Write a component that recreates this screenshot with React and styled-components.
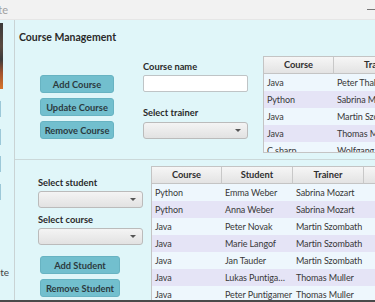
import React from "react";
import styled, { createGlobalStyle } from "styled-components";

const GlobalStyle = createGlobalStyle`
  html, body {
    margin: 0;
    padding: 0;
    width: 375px;
    height: 302px;
    overflow: hidden;
    background: #e0f6f9;
    font-family: Lato, "Open Sans", sans-serif;
    color: #333;
  }
`;

const Window = styled.div`
  width: 375px;
  height: 302px;
  display: flex;
  flex-direction: column;
  overflow: hidden;
`;

const TitleBar = styled.div`
  height: 20px;
  flex: none;
  background: #f2f2f2;
  border-bottom: 1px solid #e6e6e6;
  box-sizing: border-box;
  display: flex;
  align-items: center;
  justify-content: space-between;
  font-size: 11px;
  color: #a0a0a0;
`;

const Clip = styled.div`
  width: ${(p) => p.$w}px;
  display: flex;
  justify-content: flex-end;
  white-space: nowrap;
`;

const Minimize = styled.span`
  width: 8px;
  height: 1px;
  background: #777;
`;

const Body = styled.div`
  flex: 1;
  display: flex;
  min-height: 0;
  border-bottom: 2px solid #4a4a4a;
`;

const Sidebar = styled.div`
  width: 14px;
  flex: none;
  border-right: 1px solid #c9d3d4;
  display: flex;
  flex-direction: column;
  padding-top: 3px;
  overflow: hidden;
`;

const Photo = styled.div`
  width: 3px;
  height: 66px;
  background: linear-gradient(
    #3a3a3a 0%,
    #5a4a40 35%,
    #3c3c3c 55%,
    #a0522d 75%,
    #d8752a 100%
  );
`;

const SideStub = styled.div`
  width: 1px;
  height: 16px;
  margin-top: ${(p) => p.$gap}px;
  background: #9cc8d8;
`;

const SideText = styled.div`
  margin-top: auto;
  margin-bottom: 22px;
  font-size: 10px;
  color: #444;
`;

const Main = styled.div`
  flex: 1;
  display: flex;
  flex-direction: column;
  overflow: hidden;
`;

const TopSection = styled.div`
  height: 140px;
  flex: none;
  box-sizing: border-box;
  border-bottom: 1px solid #cbd8d9;
  padding-left: 4px;
`;

const Heading = styled.div`
  font-weight: 700;
  font-size: 10.5px;
  height: 14px;
  line-height: 14px;
  margin-top: 10px;
  color: #2a2a2a;
`;

const Row = styled.div`
  display: flex;
  align-items: flex-start;
  margin-top: ${(p) => p.$top}px;
`;

const ButtonCol = styled.div`
  display: flex;
  flex-direction: column;
  gap: 5px;
  margin-left: ${(p) => p.$left}px;
  padding-top: ${(p) => p.$top}px;
`;

const ActionButton = styled.button`
  width: ${(p) => p.$w}px;
  height: 18px;
  padding: 0;
  border: 1px solid #68b3c2;
  border-radius: 3px;
  background: #72bfce;
  font-family: inherit;
  font-weight: 700;
  font-size: 9.3px;
  white-space: nowrap;
  color: #2c3a3e;
  cursor: pointer;
`;

const FormCol = styled.div`
  display: flex;
  flex-direction: column;
  width: 105px;
  margin-left: ${(p) => p.$left}px;
  padding-top: ${(p) => p.$top}px;
`;

const Label = styled.div`
  font-weight: 700;
  font-size: 9.3px;
  height: 12px;
  line-height: 12px;
  white-space: nowrap;
  margin-top: ${(p) => p.$top || 0}px;
  margin-bottom: ${(p) => p.$bottom || 2}px;
  color: #2a2a2a;
`;

const TextField = styled.input`
  width: 105px;
  height: 17px;
  box-sizing: border-box;
  border: 1px solid #bfc4c6;
  border-radius: 2px;
  background: #fff;
  padding: 0 4px;
  outline: none;
`;

const Combo = styled.div`
  width: 105px;
  height: 17px;
  box-sizing: border-box;
  border: 1px solid #bbbbbb;
  border-radius: 3px;
  background: linear-gradient(#f4f4f4, #e2e2e2);
  display: flex;
  align-items: center;
  justify-content: flex-end;
  padding-right: 6px;
`;

const Arrow = styled.span`
  width: 0;
  height: 0;
  border-left: 3px solid transparent;
  border-right: 3px solid transparent;
  border-top: 3px solid #555;
`;

const TableBox = styled.div`
  margin-left: ${(p) => p.$left}px;
  flex: none;
  border: 1px solid #c4c4c4;
  border-right: none;
  height: ${(p) => p.$h}px;
  overflow: hidden;
  box-sizing: border-box;
  background: #eef7fd;
`;

const Grid = styled.div`
  display: grid;
  grid-template-columns: ${(p) => p.$cols};
  font-size: 9px;
`;

const HeadCell = styled.div`
  height: 16px;
  line-height: 16px;
  text-align: center;
  font-weight: 700;
  font-size: 9.3px;
  color: #2f2f2f;
  background: linear-gradient(#f6f6f6, #e3e3e3);
  border-right: 1px solid #c8c8c8;
  border-bottom: 1px solid #c4c4c4;
`;

const Cell = styled.div`
  height: 17px;
  line-height: 17px;
  padding-left: 3px;
  padding-right: 1px;
  letter-spacing: -0.1px;
  white-space: nowrap;
  overflow: hidden;
  text-overflow: ellipsis;
  color: #383838;
  background: ${(p) => (p.$odd ? "#e5e4f6" : "#eef7fd")};
`;

const BottomSection = styled.div`
  flex: 1;
  display: flex;
  align-items: flex-start;
  padding-top: 6px;
`;

const StudentCol = styled.div`
  display: flex;
  flex-direction: column;
  width: 105px;
  margin-left: 23px;
  padding-top: 11px;
`;

const courses = [
  ["Java", "Peter Thaler"],
  ["Python", "Sabrina Mozart"],
  ["Java", "Martin Szombath"],
  ["Java", "Thomas Muller"],
  ["C sharp", "Wolfgang Tauber"],
];

const enrollments = [
  ["Python", "Emma Weber", "Sabrina Mozart"],
  ["Python", "Anna Weber", "Sabrina Mozart"],
  ["Java", "Peter Novak", "Martin Szombath"],
  ["Java", "Marie Langof", "Martin Szombath"],
  ["Java", "Jan Tauder", "Martin Szombath"],
  ["Java", "Lukas Puntigamer", "Thomas Muller"],
  ["Java", "Peter Puntigamer", "Thomas Muller"],
];

const DropDown = () => (
  <Combo>
    <Arrow />
  </Combo>
);

export default function App() {
  return (
    <>
      <GlobalStyle />
      <Window>
        <TitleBar>
          <Clip $w={8}>Course Management Suite</Clip>
          <Minimize />
        </TitleBar>
        <Body>
          <Sidebar>
            <Photo />
            <SideStub $gap={12} />
            <SideStub $gap={12} />
            <SideStub $gap={11} />
            <SideStub $gap={12} />
            <SideText>
              <Clip $w={9}>Delete</Clip>
            </SideText>
          </Sidebar>
          <Main>
            <TopSection>
              <Heading>Course Management</Heading>
              <Row $top={12}>
                <ButtonCol $left={21} $top={19}>
                  <ActionButton $w={74}>Add Course</ActionButton>
                  <ActionButton $w={74}>Update Course</ActionButton>
                  <ActionButton $w={74}>Remove Course</ActionButton>
                </ButtonCol>
                <FormCol $left={29} $top={5}>
                  <Label>Course name</Label>
                  <TextField />
                  <Label $top={15} $bottom={3}>
                    Select trainer
                  </Label>
                  <DropDown />
                </FormCol>
                <TableBox $left={15} $h={97}>
                  <Grid $cols="70px 90px">
                    <HeadCell>Course</HeadCell>
                    <HeadCell>Trainer</HeadCell>
                    {courses.map((r, i) =>
                      r.map((c, j) => (
                        <Cell key={i + "-" + j} $odd={i % 2 === 1}>
                          {c}
                        </Cell>
                      ))
                    )}
                  </Grid>
                </TableBox>
              </Row>
            </TopSection>
            <BottomSection>
              <StudentCol>
                <Label>Select student</Label>
                <DropDown />
                <Label $top={6} $bottom={0}>
                  Select course
                </Label>
                <DropDown />
                <ButtonCol $left={2} $top={11}>
                  <ActionButton $w={80}>Add Student</ActionButton>
                  <ActionButton $w={80}>Remove Student</ActionButton>
                </ButtonCol>
              </StudentCol>
              <TableBox $left={8} $h={140}>
                <Grid $cols="70px 71px 71px 60px">
                  <HeadCell>Course</HeadCell>
                  <HeadCell>Student</HeadCell>
                  <HeadCell>Trainer</HeadCell>
                  <HeadCell />
                  {enrollments.map((r, i) =>
                    [...r, ""].map((c, j) => (
                      <Cell key={i + "-" + j} $odd={i % 2 === 1}>
                        {c}
                      </Cell>
                    ))
                  )}
                </Grid>
              </TableBox>
            </BottomSection>
          </Main>
        </Body>
      </Window>
    </>
  );
}
